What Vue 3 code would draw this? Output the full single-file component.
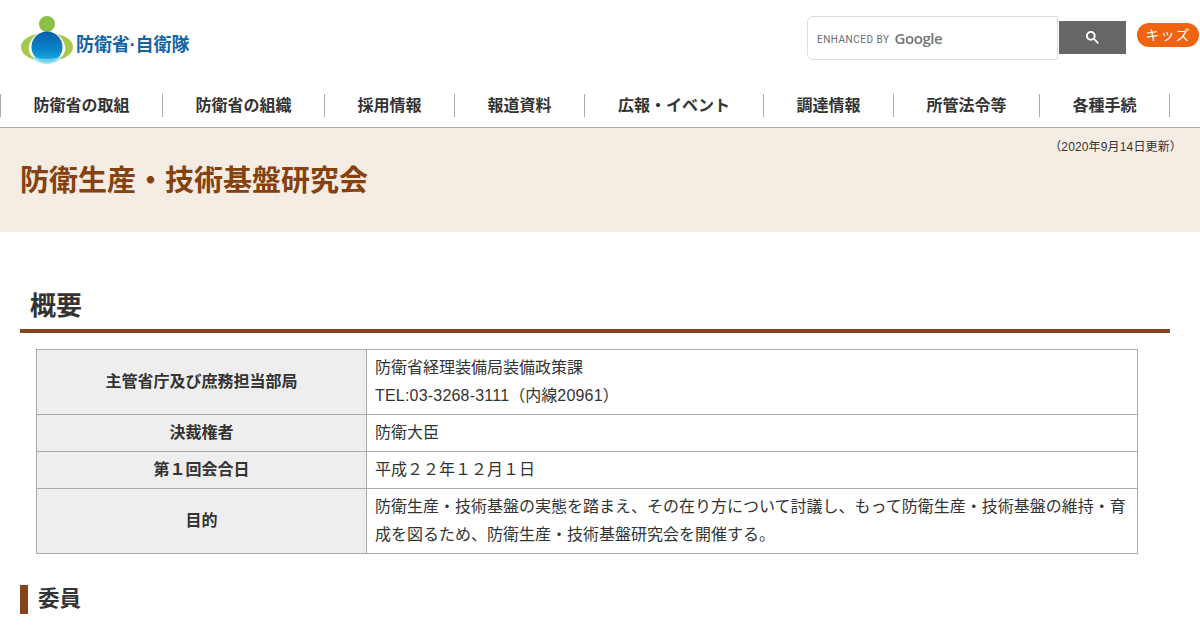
<template>
  <div class="page">
    <header class="site-header">
      <div class="top-row">
        <a class="logo">
          <svg class="logo-mark" width="54" height="50" viewBox="0 0 54 50">
            <defs>
              <linearGradient id="globe" x1="0" y1="0" x2="0" y2="1">
                <stop offset="0" stop-color="#0b5fa8" />
                <stop offset="0.6" stop-color="#0a86cc" />
                <stop offset="1" stop-color="#1ab4e6" />
              </linearGradient>
            </defs>
            <circle cx="27" cy="9" r="8" fill="#8cc047" />
            <path d="M17 19C7 21 1 26 1 32c0 6 6 11 15 13C10 41 8 36 9 31c1-5 4-9 8-12z" fill="#a5c94c" />
            <path d="M37 19c10 2 16 7 16 13 0 6-6 11-15 13 6-4 8-9 7-14-1-5-4-9-8-12z" fill="#a5c94c" />
            <circle cx="27" cy="32" r="15.5" fill="url(#globe)" />
            <path d="M12 41c8 4 22 4 30 0-3 6-9 8-15 8s-12-2-15-8z" fill="#8fdcf2" opacity=".75" />
          </svg>
          <span class="logo-text">防衛省·自衛隊</span>
        </a>
        <div class="tools">
          <div class="search">
            <div class="search-box">
              <span class="enhanced">ENHANCED BY</span>
              <span class="google">Google</span>
            </div>
            <button class="search-btn">
              <svg width="13" height="13" viewBox="0 0 13 13">
                <path d="m4.8495 7.8226c0.82666 0 1.5262-0.29146 2.0985-0.87438 0.57232-0.58292 0.86378-1.2877 0.87438-2.1144 0.010599-0.82666-0.28086-1.5262-0.87438-2.0985-0.59352-0.57232-1.293-0.86378-2.0985-0.87438-0.8055-0.010599-1.5103 0.28086-2.1144 0.87438-0.60414 0.59352-0.8956 1.293-0.87438 2.0985 0.021197 0.8055 0.31266 1.5103 0.87438 2.1144 0.56172 0.60414 1.2665 0.8956 2.1144 0.87438zm4.4695 0.2115 3.681 3.6819-1.259 1.284-3.6817-3.7 0.0019784-0.69479-0.090043-0.098846c-0.87973 0.76087-1.92 1.1413-3.1207 1.1413-1.3553 0-2.5025-0.46363-3.4417-1.3909s-1.4088-2.0686-1.4088-3.4239c0-1.3553 0.4696-2.4966 1.4088-3.4239 0.9392-0.92727 2.0864-1.3969 3.4417-1.4088 1.3553-0.011889 2.4906 0.45771 3.406 1.4088 0.9154 0.95107 1.379 2.0924 1.3909 3.4239 0 1.2126-0.38043 2.2588-1.1413 3.1385l0.098834 0.090049z" fill="#fff" />
              </svg>
            </button>
          </div>
          <a class="kids">キッズ</a>
        </div>
      </div>
      <nav class="gnav">
        <a v-for="item in navItems" :key="item.label" :style="{ width: item.width + 'px' }">{{ item.label }}</a>
      </nav>
    </header>

    <section class="title-band">
      <p class="updated">（2020年9月14日更新）</p>
      <h1>防衛生産・技術基盤研究会</h1>
    </section>

    <main class="content">
      <h2>概要</h2>
      <table class="info">
        <tbody>
          <tr>
            <th>主管省庁及び庶務担当部局</th>
            <td>防衛省経理装備局装備政策課<br /><span class="latin">TEL:03-3268-3111</span>（内線<span class="latin">20961</span>）</td>
          </tr>
          <tr v-for="row in rows" :key="row.head">
            <th>{{ row.head }}</th>
            <td>{{ row.text }}</td>
          </tr>
        </tbody>
      </table>
      <h3>委員</h3>
    </main>
  </div>
</template>

<script setup>
const navItems = [
  { label: '防衛省の取組', width: 162 },
  { label: '防衛省の組織', width: 162 },
  { label: '採用情報', width: 130 },
  { label: '報道資料', width: 130 },
  { label: '広報・イベント', width: 179 },
  { label: '調達情報', width: 130 },
  { label: '所管法令等', width: 146 },
  { label: '各種手続', width: 130 },
]

const rows = [
  { head: '決裁権者', text: '防衛大臣' },
  { head: '第１回会合日', text: '平成２２年１２月１日' },
  {
    head: '目的',
    text: '防衛生産・技術基盤の実態を踏まえ、その在り方について討議し、もって防衛生産・技術基盤の維持・育成を図るため、防衛生産・技術基盤研究会を開催する。',
  },
]
</script>

<style>
html,
body {
  margin: 0;
  overflow: hidden;
  background: #fff;
}
</style>

<style scoped>
.page {
  width: 1200px;
  height: 630px;
  overflow: hidden;
  font-family: 'Liberation Sans', 'Noto Sans CJK JP', sans-serif;
  color: #333;
}

.site-header {
  height: 127px;
  border-bottom: 1px solid #aaa;
}

.top-row {
  display: flex;
  justify-content: space-between;
  height: 94px;
}

.logo {
  display: flex;
  align-items: center;
  margin: 15px 0 0 20px;
  height: 50px;
}

.logo-text {
  margin: 6px 0 0 2px;
  font-size: 18px;
  font-weight: 700;
  letter-spacing: -0.1px;
  white-space: nowrap;
  color: #1266a8;
}

.tools {
  display: flex;
  align-items: flex-start;
}

.search {
  display: flex;
  align-items: flex-start;
  margin-top: 16px;
}

.search-box {
  box-sizing: border-box;
  width: 251px;
  height: 44px;
  display: flex;
  align-items: center;
  padding-left: 9px;
  background: #fff;
  border: 1px solid #dcdcdc;
  border-radius: 6px 0 0 6px;
}

.enhanced {
  margin-top: 2px;
  font-family: 'Roboto', sans-serif;
  font-size: 10px;
  letter-spacing: 0.5px;
  color: #6b6b6b;
}

.google {
  margin-left: 5px;
  font-family: 'Open Sans', sans-serif;
  font-size: 15px;
  font-weight: 600;
  letter-spacing: -0.4px;
  color: #757575;
}

.search-btn {
  width: 67px;
  height: 33px;
  margin: 5px 0 0 1px;
  padding: 0;
  border: 0;
  display: flex;
  align-items: center;
  justify-content: center;
  background: #666;
}

.kids {
  width: 62px;
  height: 24px;
  margin: 23px 1px 0 11px;
  border-radius: 12px;
  background: #f0640f;
  color: #fff;
  font-size: 14px;
  line-height: 25px;
  letter-spacing: 1px;
  text-align: center;
}

.gnav {
  display: flex;
  height: 23px;
  border-left: 1px solid #aaa;
  width: 1169px;
}

.gnav a {
  box-sizing: border-box;
  flex: none;
  border-right: 1px solid #aaa;
  text-align: center;
  font-size: 16px;
  font-weight: 700;
  line-height: 23px;
  color: #333;
}

.title-band {
  position: relative;
  height: 104px;
  background: #f5ece3;
}

.updated {
  margin: 0;
  padding: 11px 18px 0 0;
  text-align: right;
  font-size: 12px;
  line-height: 16px;
  letter-spacing: 0.15px;
  color: #333;
}

.title-band h1 {
  margin: 4px 0 0 20px;
  font-size: 29px;
  line-height: 44px;
  font-weight: 700;
  color: #85420f;
}

.content {
  padding: 0 30px 0 20px;
}

h2 {
  margin: 57px 0 16px;
  padding: 0 0 5px 10px;
  border-bottom: 4px solid #85451a;
  font-size: 26px;
  line-height: 35px;
  font-weight: 700;
  color: #333;
}

.info {
  width: 1102px;
  margin-left: 16px;
  border-collapse: collapse;
  font-size: 16px;
  line-height: 28px;
}

.info th,
.info td {
  padding: 4px 8px;
  border: 1px solid #aaa;
  box-sizing: border-box;
}

.info th {
  width: 330px;
  background: #eee;
  font-weight: 700;
  text-align: center;
}

.info td {
  text-align: left;
}

.latin {
  letter-spacing: 0.2px;
}

h3 {
  margin: 31px 0 0;
  padding-left: 10px;
  border-left: 8px solid #85451a;
  font-size: 21.5px;
  line-height: 29px;
  font-weight: 700;
  color: #333;
}
</style>
